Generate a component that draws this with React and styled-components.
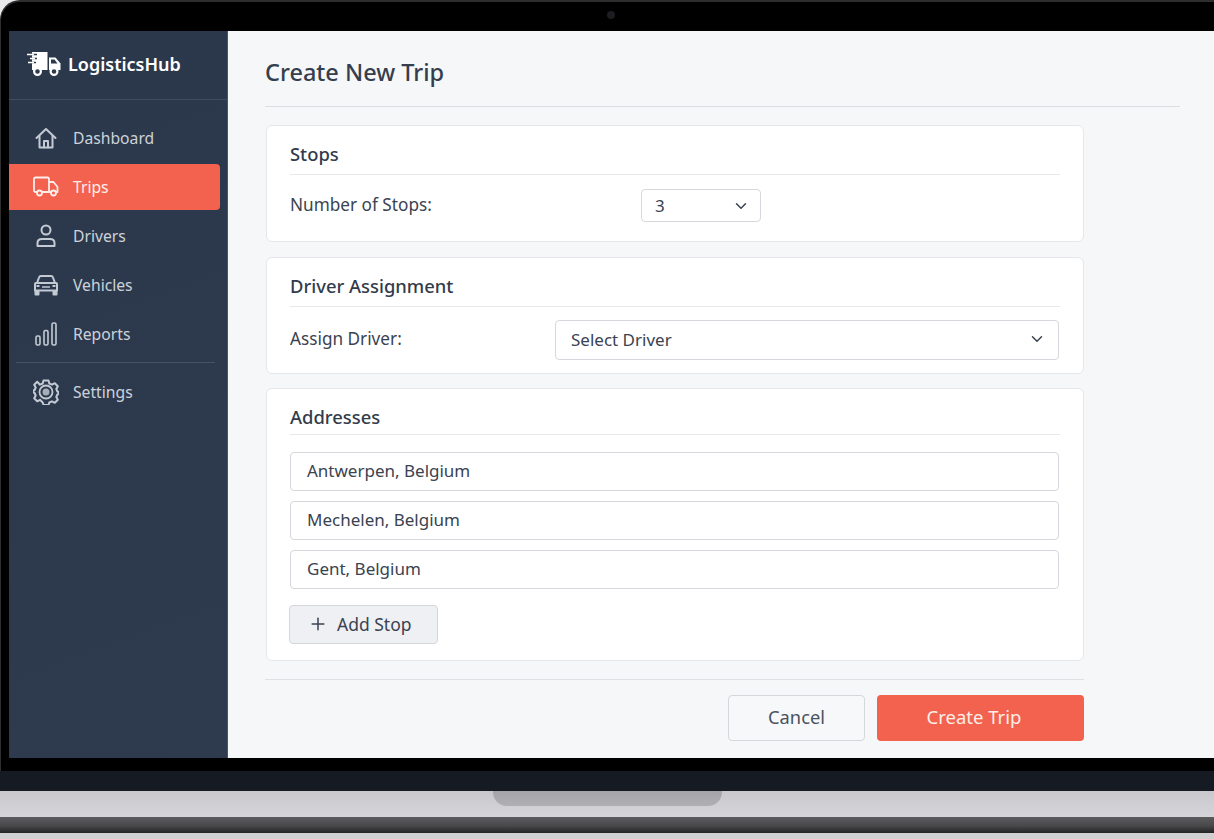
import styled, { createGlobalStyle } from "styled-components";
import { ChevronDown, Plus } from "lucide-react";

const GlobalStyle = createGlobalStyle`
  html, body {
    margin: 0;
    padding: 0;
    background: #e8e8ea;
    font-family: "Noto Sans", "Open Sans", sans-serif;
  }
  * {
    box-sizing: border-box;
  }
`;

const LogoIcon = () => (
  <svg width="36" height="26" viewBox="0 0 36 26" fill="none">
    <path d="M6 1h15.500v18H6z" fill="#fff" />
    <path d="M0 3.500h11M3 7.500h8M0 11.500h10" stroke="#2c3a4e" strokeWidth="1.400" />
    <path d="M1 3.500h7M4 7.500h5M2 11.500h6" stroke="#fff" strokeWidth="1.400" />
    <path d="M23 6.500h6.500l5 6v6.500H23z" fill="#fff" />
    <path d="M25 8.500h3.500l3 4H25z" fill="#2c3a4e" />
    <circle cx="11.500" cy="20.500" r="3.400" fill="#2c3a4e" stroke="#fff" strokeWidth="2.200" />
    <circle cx="28" cy="20.500" r="3.400" fill="#2c3a4e" stroke="#fff" strokeWidth="2.200" />
  </svg>
);

const HomeIcon = () => (
  <svg width="24" height="24" viewBox="0 0 24 24" fill="none" stroke="currentColor" strokeWidth="2" strokeLinejoin="round" strokeLinecap="round">
    <path d="M2.500 12 12 3l9.500 9" />
    <path d="M5.500 10v11.500h13V10" />
    <path d="M10 21.500V15h4v6.500" />
  </svg>
);

const TruckIcon = () => (
  <svg width="26" height="22" viewBox="0 0 26 22" fill="none" stroke="currentColor" strokeWidth="1.800" strokeLinejoin="round" strokeLinecap="round">
    <path d="M4 16H2.500A1.500 1.500 0 0 1 1 14.500V3a1.500 1.500 0 0 1 1.500-1.500h12A1.500 1.500 0 0 1 16 3v13H9" />
    <path d="M16 6h4.500l4 5v5h-1.500" />
    <path d="M16 16h2" />
    <circle cx="6.500" cy="17" r="2.500" />
    <circle cx="20.500" cy="17" r="2.500" />
  </svg>
);

const DriverIcon = () => (
  <svg width="22" height="24" viewBox="0 0 22 24" fill="none" stroke="currentColor" strokeWidth="2" strokeLinejoin="round">
    <circle cx="11" cy="6" r="4.500" />
    <path d="M2.500 22v-3c0-2.500 2-4 4.500-4h8c2.500 0 4.500 1.500 4.500 4v3z" />
  </svg>
);

const CarIcon = () => (
  <svg width="24" height="22" viewBox="0 0 24 22" fill="none" stroke="currentColor" strokeWidth="2" strokeLinejoin="round">
    <path d="M3 9 5 3.500C5.300 2.500 6 2 7 2h10c1 0 1.700.5 2 1.500L21 9" />
    <path d="M2 9h20c.5 0 1 .5 1 1v6.500H1V10c0-.5.500-1 1-1z" />
    <path d="M1.500 17v3.500h3V17M19.500 17v3.500h3V17" fill="currentColor" />
    <path d="M8 13h8" strokeWidth="1.500" />
    <path d="M2.500 12h3M18.500 12h3" />
  </svg>
);

const ChartIcon = () => (
  <svg width="22" height="24" viewBox="0 0 22 24" fill="none" stroke="currentColor" strokeWidth="1.600">
    <rect x="1" y="14" width="4" height="9" rx="1.500" />
    <rect x="9" y="8.500" width="4" height="14.500" rx="1.500" />
    <rect x="17" y="1" width="4" height="22" rx="1.500" />
  </svg>
);

const GearIcon = () => (
  <svg width="26" height="26" viewBox="0 0 26 26" fill="none" stroke="currentColor" strokeWidth="2" strokeLinejoin="round">
    <path d="M10.500 1.500h5l.8 3 2.700 1.200 2.800-1.500 3 3-1.500 2.800 1.100 2.500 1.100.5v2l-1.100.5-1.100 2.500 1.500 2.800-3 3-2.800-1.500-2.700 1.200-.8 2.500h-5l-.8-2.500L7 20.800l-2.800 1.500-3-3 1.500-2.800-1.100-2.500-1.100-.5v-2l1.100-.5 1.100-2.500-1.500-2.800 3-3L7 5.700l2.700-1.200z" />
    <circle cx="13" cy="13" r="6.500" strokeWidth="1.800" />
    <circle cx="13" cy="13" r="3.500" fill="currentColor" stroke="none" opacity="0.800" />
  </svg>
);

const navTop = [
  { label: "Dashboard", icon: <HomeIcon /> },
  { label: "Trips", icon: <TruckIcon />, active: true },
  { label: "Drivers", icon: <DriverIcon /> },
  { label: "Vehicles", icon: <CarIcon /> },
  { label: "Reports", icon: <ChartIcon /> },
];

const addresses = ["Antwerpen, Belgium", "Mechelen, Belgium", "Gent, Belgium"];

const App = () => {
  return (
    <Laptop>
      <GlobalStyle />
      <Lid>
        <TopBezel>
          <Camera />
        </TopBezel>
        <Screen>
          <Sidebar>
            <Brand>
              <LogoIcon />
              <BrandName>LogisticsHub</BrandName>
            </Brand>
            <Nav>
              {navTop.map((item) => (
                <NavItem key={item.label} $active={item.active}>
                  <NavIcon $active={item.active}>{item.icon}</NavIcon>
                  {item.label}
                </NavItem>
              ))}
              <NavDivider />
              <NavItem>
                <NavIcon>
                  <GearIcon />
                </NavIcon>
                Settings
              </NavItem>
            </Nav>
          </Sidebar>
          <Main>
            <PageTitle>Create New Trip</PageTitle>
            <Form>
              <Card>
                <CardTitle>Stops</CardTitle>
                <StopsRow>
                  <Label>Number of Stops:</Label>
                  <SmallSelect>
                    3
                    <ChevronDown size={18} strokeWidth={2} />
                  </SmallSelect>
                </StopsRow>
              </Card>
              <DriverCard>
                <CardTitle>Driver Assignment</CardTitle>
                <DriverRow>
                  <Label>Assign Driver:</Label>
                  <WideSelect>
                    Select Driver
                    <ChevronDown size={18} strokeWidth={2} />
                  </WideSelect>
                </DriverRow>
              </DriverCard>
              <AddressCard>
                <CardTitle $short>Addresses</CardTitle>
                <AddressList>
                  {addresses.map((address) => (
                    <AddressInput key={address}>{address}</AddressInput>
                  ))}
                </AddressList>
                <AddStop>
                  <Plus size={20} strokeWidth={1.8} />
                  Add Stop
                </AddStop>
              </AddressCard>
              <Footer>
                <CancelButton>Cancel</CancelButton>
                <CreateButton>Create Trip</CreateButton>
              </Footer>
            </Form>
          </Main>
        </Screen>
        <BottomBezel />
      </Lid>
      <Hinge />
      <Base>
        <Notch />
      </Base>
      <BaseShadow />
      <BaseEdge />
    </Laptop>
  );
};

const Laptop = styled.div`
  width: 1214px;
  height: 839px;
  overflow: hidden;
  display: flex;
  flex-direction: column;
`;
const Lid = styled.div`
  height: 771px;
  display: flex;
  flex-direction: column;
  background: #000;
  border-top: 2px solid #2e2e30;
  border-left: 1px solid #2e2e30;
  border-top-left-radius: 20px;
`;
const TopBezel = styled.div`
  height: 29px;
  flex-shrink: 0;
  display: flex;
  justify-content: center;
  padding: 9px 0 0 6px;
`;
const Camera = styled.div`
  width: 8px;
  height: 8px;
  border-radius: 50%;
  background: #1b1d20;
`;
const Screen = styled.div`
  height: 727px;
  margin-left: 8px;
  display: flex;
  overflow: hidden;
`;
const BottomBezel = styled.div`
  height: 13px;
`;
const Sidebar = styled.aside`
  width: 219px;
  flex-shrink: 0;
  background: linear-gradient(160deg, #2b384b, #2e3b4f);
  border-right: 1px solid #4a5566;
`;
const Brand = styled.div`
  height: 69px;
  display: flex;
  align-items: center;
  gap: 6px;
  padding: 0 0 3px 17px;
  border-bottom: 1px solid #3f4b5e;
`;
const BrandName = styled.span`
  font-size: 18px;
  font-weight: 600;
  color: #fff;
`;
const Nav = styled.nav`
  display: flex;
  flex-direction: column;
  padding: 15px 7px 0 0;
`;
const NavItem = styled.div`
  height: 46px;
  flex-shrink: 0;
  margin-bottom: 3px;
  display: flex;
  align-items: center;
  font-size: 15.700px;
  color: ${(p) => (p.$active ? "#fdeee9" : "#ccd2da")};
  background: ${(p) => (p.$active ? "#f2624f" : "transparent")};
  border-radius: 0 4px 4px 0;
`;
const NavIcon = styled.span`
  width: 64px;
  padding-left: 10px;
  display: flex;
  justify-content: center;
  flex-shrink: 0;
  color: ${(p) => (p.$active ? "#fdeee9" : "#c3cad3")};
`;
const NavDivider = styled.div`
  height: 1px;
  margin: 2px 5px 6px 7px;
  background: #465265;
`;
const Main = styled.main`
  flex: 1;
  background: #f6f7f9;
  padding: 0 34px 0 37px;
`;
const PageTitle = styled.h1`
  margin: 0;
  height: 76px;
  display: flex;
  align-items: center;
  padding-top: 7px;
  font-size: 23.500px;
  font-weight: 500;
  color: #353e4d;
  border-bottom: 1px solid #dcdee2;
`;
const Form = styled.div`
  width: 819px;
  padding-top: 18px;
  display: flex;
  flex-direction: column;
`;
const Card = styled.section`
  height: 117px;
  margin-left: 1px;
  padding: 15px 23px 0;
  background: #fff;
  border: 1px solid #e5e7ea;
  border-radius: 6px;
`;
const DriverCard = styled(Card)`
  margin-top: 15px;
`;
const AddressCard = styled(Card)`
  height: 273px;
  margin-top: 14px;
`;
const CardTitle = styled.h2`
  margin: 0;
  height: ${(p) => (p.$short ? "31px" : "34px")};
  font-size: 18.400px;
  line-height: 26px;
  font-weight: 500;
  color: #323b4a;
  border-bottom: 1px solid #e7e8eb;
`;
const Label = styled.label`
  font-size: 17.200px;
  color: #3a4351;
`;
const StopsRow = styled.div`
  display: grid;
  grid-template-columns: 351px 120px;
  align-items: center;
  margin-top: 14px;
  ${Label} {
    margin-bottom: 2px;
  }
`;
const SelectBase = styled.div`
  display: flex;
  align-items: center;
  justify-content: space-between;
  font-size: 17px;
  color: #3a4351;
  background: #fff;
  border: 1px solid #d5d8dc;
  border-radius: 4px;
`;
const SmallSelect = styled(SelectBase)`
  height: 33px;
  padding: 0 10px 0 13px;
`;
const DriverRow = styled.div`
  display: flex;
  align-items: center;
  justify-content: space-between;
  margin: 13px 1px 0 0;
  ${Label} {
    margin-bottom: 3px;
  }
`;
const WideSelect = styled(SelectBase)`
  width: 504px;
  height: 40px;
  padding: 0 12px 2px 15px;
`;
const AddressList = styled.div`
  display: flex;
  flex-direction: column;
  gap: 10px;
  margin: 17px 1px 0 0;
`;
const AddressInput = styled.div`
  height: 39px;
  display: flex;
  align-items: center;
  padding: 0 16px 2px;
  font-size: 17px;
  color: #3a4351;
  background: #fff;
  border: 1px solid #d5d8dc;
  border-radius: 4px;
`;
const AddStop = styled.button`
  width: 149px;
  height: 39px;
  margin: 16px 0 0 -1px;
  display: flex;
  align-items: center;
  gap: 9px;
  padding: 0 0 2px 18px;
  font: inherit;
  font-size: 17.500px;
  color: #3a4351;
  background: #eff0f3;
  border: 1px solid #d5d7db;
  border-radius: 4px;
`;
const Footer = styled.div`
  margin-top: 18px;
  padding-top: 15px;
  display: flex;
  justify-content: flex-end;
  gap: 12px;
  border-top: 1px solid #dfe1e4;
`;
const CancelButton = styled.button`
  width: 137px;
  height: 46px;
  padding: 0 0 3px;
  font: inherit;
  font-size: 18.300px;
  color: #4a5260;
  background: #f7f8fa;
  border: 1px solid #d5d7db;
  border-radius: 4px;
`;
const CreateButton = styled.button`
  width: 207px;
  height: 46px;
  padding: 0 13px 3px 0;
  font: inherit;
  font-size: 18.500px;
  color: #fdeee9;
  background: #f2624f;
  border: none;
  border-radius: 4px;
`;
const Hinge = styled.div`
  height: 20px;
  background: #161a22;
`;
const Base = styled.div`
  height: 26px;
  display: flex;
  justify-content: center;
  background: linear-gradient(#c9c9cd, #d6d6da);
`;
const Notch = styled.div`
  width: 229px;
  height: 15px;
  background: linear-gradient(#a5a5a9, #b0b0b4);
  border-radius: 0 0 14px 14px;
`;
const BaseShadow = styled.div`
  height: 16px;
  background: linear-gradient(#5c5c5f, #48484b 55%, #232325);
`;
const BaseEdge = styled.div`
  height: 6px;
  background: #cfcfd2;
`;

export default App;
